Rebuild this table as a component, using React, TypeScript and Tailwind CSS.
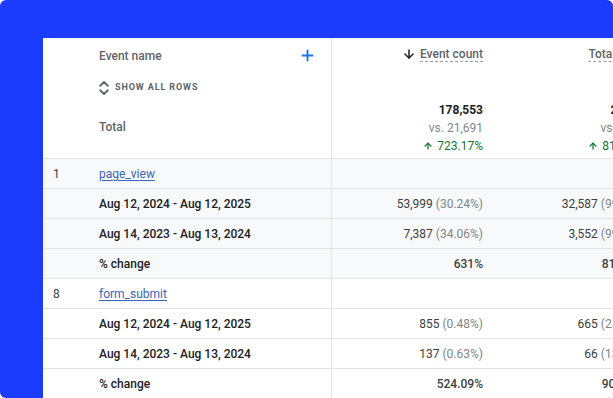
import React from "react";
import { Plus, ChevronsUpDown, ArrowDown, ArrowUp } from "lucide-react";

const COLS = "grid grid-cols-[56px_232px_169px_165px]";

type Row = {
  num?: string;
  label: string;
  kind: "link" | "date" | "change";
  v1?: [string, string?];
  v2?: [string, string?];
};

function Val({ v }: { v?: [string, string?] }) {
  if (!v) return null;
  return (
    <span className="whitespace-nowrap">
      <span className="text-[#3c4043]">{v[0]}</span>
      {v[1] ? <span className="text-[#80868b]"> {v[1]}</span> : null}
    </span>
  );
}

function DataRow({ r, gray }: { r: Row; gray: boolean }) {
  return (
    <div
      className={`${COLS} h-[30px] border-b border-[#e3e3e3] text-[12px] ${
        gray ? "bg-[#f8f9fa]" : "bg-white"
      }`}
    >
      <div className="flex items-center pl-[10px] text-[#3c4043]">{r.num}</div>
      <div className="flex items-center">
        {r.kind === "link" ? (
          <span className="text-[#3b63b9] underline underline-offset-[2px] decoration-[1px]">
            {r.label}
          </span>
        ) : (
          <span className="font-medium text-[#202124]">{r.label}</span>
        )}
      </div>
      <div
        className={`flex items-center justify-end pr-[17px] border-l border-[#e3e3e3] ${
          r.kind === "change" ? "font-medium" : ""
        }`}
      >
        <Val v={r.v1} />
      </div>
      <div
        className={`flex items-center justify-end pr-[17px] ${
          r.kind === "change" ? "font-medium" : ""
        }`}
      >
        <Val v={r.v2} />
      </div>
    </div>
  );
}

const group1: Row[] = [
  { num: "1", label: "page_view", kind: "link" },
  {
    label: "Aug 12, 2024 - Aug 12, 2025",
    kind: "date",
    v1: ["53,999", "(30.24%)"],
    v2: ["32,587", "(99.82%)"],
  },
  {
    label: "Aug 14, 2023 - Aug 13, 2024",
    kind: "date",
    v1: ["7,387", "(34.06%)"],
    v2: ["3,552", "(99.41%)"],
  },
  { label: "% change", kind: "change", v1: ["631%"], v2: ["817.42%"] },
];

const group2: Row[] = [
  { num: "8", label: "form_submit", kind: "link" },
  {
    label: "Aug 12, 2024 - Aug 12, 2025",
    kind: "date",
    v1: ["855", "(0.48%)"],
    v2: ["665", "(25.12%)"],
  },
  {
    label: "Aug 14, 2023 - Aug 13, 2024",
    kind: "date",
    v1: ["137", "(0.63%)"],
    v2: ["66", "(13.64%)"],
  },
  { label: "% change", kind: "change", v1: ["524.09%"], v2: ["907.58%"] },
];

function MetricHead({
  title,
  arrow,
  total,
  vs,
  change,
  border,
}: {
  title: string;
  arrow?: boolean;
  total: string;
  vs: string;
  change: string;
  border?: boolean;
}) {
  return (
    <div
      className={`flex flex-col items-end pr-[17px] ${
        border ? "border-l border-[#e3e3e3]" : ""
      }`}
    >
      <div className="h-[32px] flex items-center gap-[4px] whitespace-nowrap">
        {arrow ? (
          <ArrowDown size={14} strokeWidth={2.6} className="text-[#202124]" />
        ) : null}
        <span className="text-[12px] font-medium text-[#5f6368] leading-[14px] pt-[1px] border-b border-dashed border-[#9aa0a6]">
          {title}
        </span>
      </div>
      <div className="mt-[31px] flex flex-col items-end text-[12px] leading-[18px] whitespace-nowrap">
        <span className="font-bold text-[#202124]">{total}</span>
        <span className="text-[#80868b]">{vs}</span>
        <span className="flex items-center gap-[4px] text-[#137333]">
          <ArrowUp size={10} strokeWidth={3} />
          {change}
        </span>
      </div>
    </div>
  );
}

export default function App() {
  return (
    <div className="w-[613px] h-[398px] bg-[#1b3cfd] rounded-[6px] overflow-hidden pl-[43px] pt-[38px] font-['Roboto',sans-serif]">
      <div className="w-[570px] h-[360px] bg-white overflow-hidden">
        <div className="w-[622px]">
          <div className={`${COLS} h-[121px] border-b border-[#e3e3e3]`}>
            <div />
            <div className="flex flex-col">
              <div className="h-[35px] flex items-center justify-between pr-[15px]">
                <span className="text-[12px] font-medium text-[#5f6368]">
                  Event name
                </span>
                <Plus size={17} strokeWidth={2.6} className="text-[#1a73e8]" />
              </div>
              <div className="h-[29px] flex items-center">
                <ChevronsUpDown
                  size={18}
                  strokeWidth={2.4}
                  className="text-[#5f6368] -ml-[4px]"
                />
                <span className="ml-[2px] text-[9px] font-bold tracking-[0.9px] text-[#5f6368]">
                  SHOW ALL ROWS
                </span>
              </div>
              <div className="h-[50px] flex items-center">
                <span className="text-[12px] font-medium text-[#5f6368]">
                  Total
                </span>
              </div>
            </div>
            <MetricHead
              border
              arrow
              title="Event count"
              total="178,553"
              vs="vs. 21,691"
              change="723.17%"
            />
            <MetricHead
              title="Total users"
              total="27,421"
              vs="vs. 3,108"
              change="813.17%"
            />
          </div>
          {group1.map((r, i) => (
            <DataRow key={"a" + i} r={r} gray />
          ))}
          {group2.map((r, i) => (
            <DataRow key={"b" + i} r={r} gray={false} />
          ))}
        </div>
      </div>
    </div>
  );
}
